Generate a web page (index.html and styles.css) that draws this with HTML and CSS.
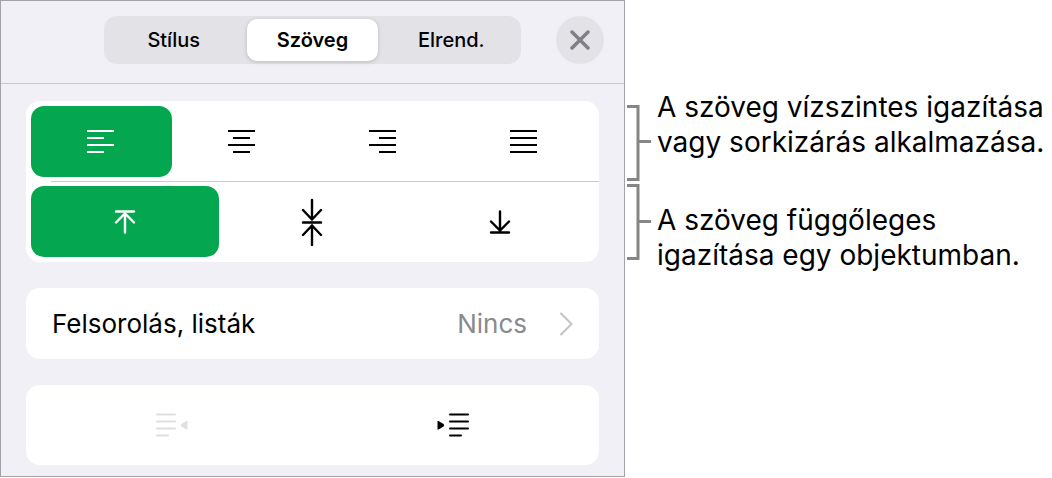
FILE: index.html
```html
<!DOCTYPE html>
<html lang="hu">
<head>
<meta charset="utf-8">
<meta name="viewport" content="width=device-width, initial-scale=1">
<title>Szöveg igazítása</title>
<link rel="stylesheet" href="styles.css">
</head>
<body>
<main class="figure">
  <section class="panel" aria-label="Formázás">
    <header class="panel-header">
      <div class="tabs" role="tablist">
        <button class="tab" type="button" role="tab" aria-selected="false">Stílus</button>
        <button class="tab tab-selected" type="button" role="tab" aria-selected="true">Szöveg</button>
        <button class="tab" type="button" role="tab" aria-selected="false">Elrend.</button>
      </div>
      <button class="close" type="button" aria-label="Bezárás">
        <svg width="20" height="20" viewBox="0 0 20 20"><path d="M2 2l16 16M18 2l-16 16" stroke-width="3.500"/></svg>
      </button>
    </header>

    <div class="panel-body">
      <div class="card">
        <div class="align-row align-horizontal">
          <button class="option option-selected" type="button" aria-pressed="true" aria-label="Balra">
            <svg width="28" height="24" viewBox="0 0 28 24"><path d="M0 1h27M0 8h17M0 15h27M0 22h17"/></svg>
          </button>
          <button class="option" type="button" aria-pressed="false" aria-label="Középre">
            <svg width="28" height="24" viewBox="0 0 28 24"><path d="M0 1h27M5 8h17M0 15h27M5 22h17"/></svg>
          </button>
          <button class="option" type="button" aria-pressed="false" aria-label="Jobbra">
            <svg width="28" height="24" viewBox="0 0 28 24"><path d="M0 1h27M10 8h17M0 15h27M10 22h17"/></svg>
          </button>
          <button class="option" type="button" aria-pressed="false" aria-label="Sorkizárt">
            <svg width="28" height="24" viewBox="0 0 28 24"><path d="M0 1h27M0 8h27M0 15h27M0 22h27"/></svg>
          </button>
        </div>
        <div class="divider"></div>
        <div class="align-row align-vertical">
          <button class="option option-selected" type="button" aria-pressed="true" aria-label="Fent">
            <svg class="round arrow" width="22" height="24" viewBox="0 0 22 24"><path d="M2 1.500h18M11 3.500v19M2 12.500l9-9 9 9"/></svg>
          </button>
          <button class="option" type="button" aria-pressed="false" aria-label="Középen">
            <svg class="round arrow" width="22" height="48" viewBox="0 0 22 48"><path d="M2 24.500h18M11 2v19.500M2 12l9 9.500 9-9.500M11 47V27.500M2 37l9-9.500 9 9.500"/></svg>
          </button>
          <button class="option" type="button" aria-pressed="false" aria-label="Lent">
            <svg class="round arrow" width="22" height="24" viewBox="0 0 22 24"><path d="M2 22.500h18M11 1.500v19M2 11.500l9 9 9-9"/></svg>
          </button>
        </div>
      </div>

      <button class="card list-row" type="button">
        <span class="list-label">Felsorolás, listák</span>
        <span class="list-value">Nincs</span>
        <svg class="chevron" width="14" height="24" viewBox="0 0 14 24"><path d="M2 1.500l10.500 10.500L2 22.500"/></svg>
      </button>

      <div class="card indent-row">
        <button class="indent" type="button" disabled aria-label="Behúzás csökkentése">
          <svg class="round" width="32" height="24" viewBox="0 0 32 24"><path d="M1 1.500h18M1 8.500h18M1 15.500h18M1 22.500h11"/><path class="solid" d="M31.500 8.500v7.500q0 1-1 .5l-5-3q-1.500-1.200 0-2.400l5-3q1-.6 1 .4z"/></svg>
        </button>
        <button class="indent" type="button" aria-label="Behúzás növelése">
          <svg class="round" width="32" height="24" viewBox="0 0 32 24"><path d="M13 1.500h18M13 8.500h18M13 15.500h18M13 22.500h11"/><path class="solid" d="M.5 8.500v7.500q0 1 1 .5l5-3q1.500-1.200 0-2.400l-5-3q-1-.6-1 .4z"/></svg>
        </button>
      </div>
    </div>
  </section>

  <aside class="notes">
    <div class="note note-first">
      <svg class="bracket" width="26" height="76" viewBox="0 0 26 76"><path d="M0 1.500h11v73H0M11 36.500h13"/></svg>
      <p class="note-text">A szöveg vízszintes igazítása<br>vagy sorkizárás alkalmazása.</p>
    </div>
    <div class="note note-second">
      <svg class="bracket" width="26" height="76" viewBox="0 0 26 76"><path d="M0 1.500h11v73H0M11 37.500h13"/></svg>
      <p class="note-text">A szöveg függőleges<br>igazítása egy objektumban.</p>
    </div>
  </aside>
</main>
</body>
</html>
```

FILE: styles.css
```css
* {
  box-sizing: border-box;
}

body {
  margin: 0;
  background: #fff;
  color: #000;
  font-family: Inter, "Liberation Sans", sans-serif;
}

button {
  margin: 0;
  padding: 0;
  border: 0;
  background: none;
  color: inherit;
  font: inherit;
}

svg {
  display: block;
  flex: none;
  fill: none;
  stroke: currentColor;
  stroke-width: 2;
}

.figure {
  display: flex;
  align-items: flex-start;
}

.panel {
  flex: 1;
  min-width: 0;
  border: 1px solid #a3a2a8;
  background: #f1f0f6;
}

.panel-header {
  display: grid;
  grid-template-columns: 1fr 5fr 1fr;
  align-items: center;
  padding: 15px 20px 19px;
  border-bottom: 1px solid #c9c8cd;
}

.tabs {
  grid-column: 2;
  display: grid;
  grid-template-columns: repeat(3, 1fr);
  gap: 8px;
  padding: 3px 4px;
  border-radius: 13px;
  background: #e3e2e7;
}

.tab {
  height: 42px;
  border-radius: 10px;
  font-size: 20px;
  font-weight: 500;
}

.tab-selected {
  background: #fff;
  box-shadow: 0 1px 4px rgba(0, 0, 0, 0.18);
  font-weight: 600;
}

.close {
  display: grid;
  place-items: center;
  justify-self: end;
  width: 48px;
  height: 48px;
  border-radius: 50%;
  background: #e3e2e7;
  color: #817f86;
}

.close svg,
.round,
.chevron {
  stroke-linecap: round;
}

.arrow {
  stroke-width: 2.4;
}

.panel-body {
  display: flex;
  flex-direction: column;
  gap: 26px;
  padding: 17px 25px 11px;
}

.card {
  border-radius: 14px;
  background: #fff;
}

.align-row {
  display: grid;
  padding: 5px;
}

.align-horizontal {
  grid-template-columns: repeat(4, 1fr);
  padding-bottom: 4px;
}

.align-vertical {
  grid-template-columns: repeat(3, 1fr);
  padding-top: 4px;
}

.divider {
  height: 1px;
  margin-left: 25px;
  background: #cbcacd;
}

.option {
  display: grid;
  place-items: center;
  height: 71px;
  border-radius: 13px;
}

.option-selected {
  background: #04a650;
  color: #fff;
}

.list-row {
  display: flex;
  align-items: center;
  height: 71px;
  padding: 0 26px;
  font-size: 26px;
  text-align: left;
}

.list-label {
  flex: 1;
}

.list-value {
  margin-right: 32px;
  color: #8a898e;
}

.chevron {
  color: #c3c2c6;
}

.indent-row {
  display: grid;
  grid-template-columns: repeat(2, 1fr);
  padding: 0 5px;
}

.indent {
  display: grid;
  place-items: center;
  height: 80px;
}

.indent:first-child {
  justify-items: center;
}

.indent:disabled {
  color: #dfdfdf;
}

.solid {
  fill: currentColor;
  stroke: none;
}

.notes {
  display: grid;
  flex: 0 0 427px;
  gap: 3px;
  padding: 90px 0 0 2px;
}

.note {
  display: flex;
  gap: 4px;
}

.note-first .bracket {
  margin-top: 15px;
}

.note-second .note-text {
  padding-top: 19px;
}

.bracket {
  color: #868686;
  stroke-width: 3;
}

.note-text {
  margin: 0;
  font-size: 28px;
  line-height: 35px;
  white-space: nowrap;
}
```
